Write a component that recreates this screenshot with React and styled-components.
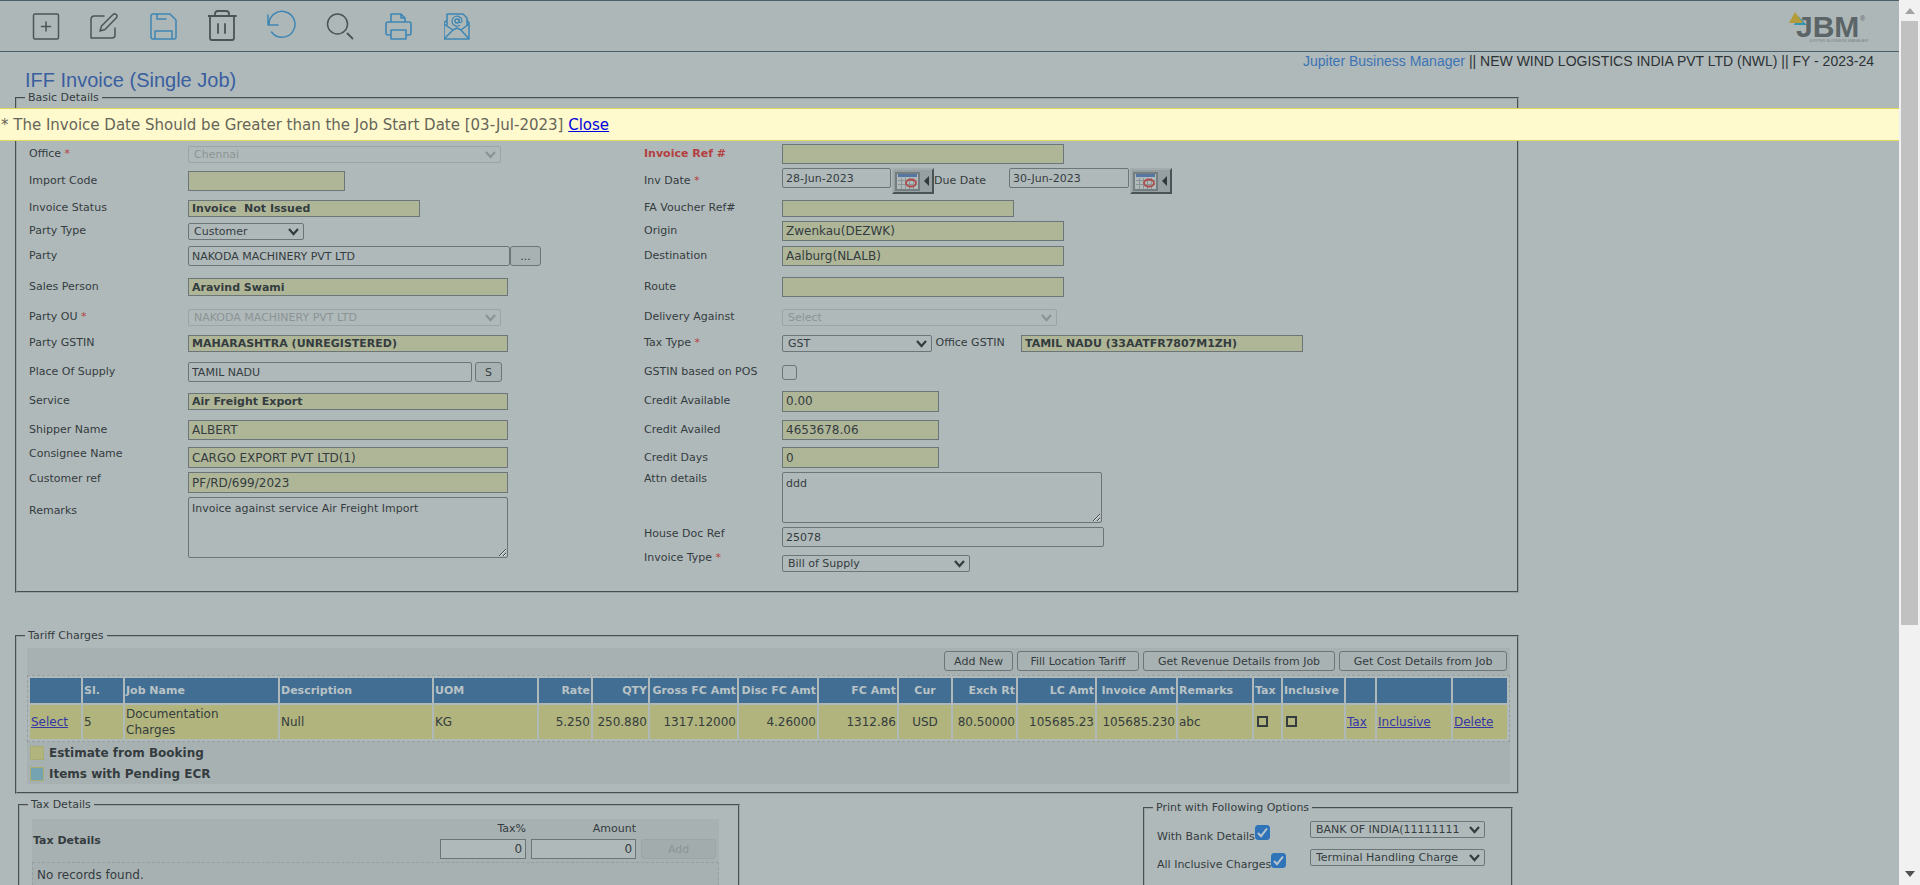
import React from "react";
import styled, { createGlobalStyle, css } from "styled-components";

const c = {
  page: "#b0b9ba",
  toolbar: "#aeb7b8",
  panel: "#a8b1b2",
  button: "#a9b2b3",
  line: "#4a5d68",
  ink: "#343c3f",
  border: "#6c7577",
  faint: "#9ca5a6",
  faintText: "#8b9495",
  olive: "#afb698",
  row: "#b1b47c",
  head: "#426e93",
  headText: "#b9c3c6",
  red: "#b3403f",
  link: "#3537a8",
  blue: "#3e86b4",
};

const Global = createGlobalStyle`
  *, *::before, *::after { box-sizing: border-box; }
  body { margin: 0; background: ${c.page}; overflow: hidden; }
  body, input, select, textarea, button {
    font-family: "DejaVu Sans", Verdana, sans-serif;
    font-size: 11px;
    color: ${c.ink};
  }
`;

const Shell = styled.div`
  display: grid;
  grid-template-columns: minmax(0, 1fr) 21px;
  height: 100vh;
`;

const Page = styled.main`
  position: relative;
  overflow: hidden;
  background: ${c.page};
`;

const Toolbar = styled.header`
  display: flex;
  align-items: center;
  justify-content: space-between;
  height: 52px;
  padding: 0 20px 0 31px;
  background: ${c.toolbar};
  border: solid ${c.line};
  border-width: 1px 0;
`;

const Tools = styled.nav`
  display: flex;
  gap: 29px;
`;

const ToolButton = styled.button`
  width: 30px;
  height: 32px;
  padding: 0;
  border: 0;
  background: none;
  color: ${(p) => (p.$blue ? c.blue : "#4b5457")};
  svg { display: block; }
`;

const Company = styled.div`
  display: flex;
  justify-content: flex-end;
  gap: 4px;
  height: 17px;
  padding-right: 25px;
  font: 14px/19px "Liberation Sans", Arial, sans-serif;
  color: #2b3235;
  a { color: #3b74b5; text-decoration: none; }
`;

const Title = styled.h1`
  margin: 0 0 0 25px;
  height: 22px;
  font: 20px/22px "Liberation Sans", Arial, sans-serif;
  color: #3a5f9f;
`;

const Notice = styled.div`
  position: absolute;
  top: 108px;
  left: 0;
  right: 0;
  height: 33px;
  padding-left: 1px;
  line-height: 33px;
  font-size: 15px;
  color: #66655a;
  background: #fffacd;
  border: solid #dfd75a;
  border-width: 1px 0;
  a { color: #0000dd; }
`;

const Group = styled.fieldset`
  margin: 0;
  min-width: 0;
  border: 2px groove #98a2a3;
  padding: 0;
`;

const Legend = styled.legend`
  margin-left: 8px;
  padding: 0 3px;
  line-height: 14px;
`;

const Basic = styled(Group)`
  width: 79.2%;
  margin-left: 15px;
`;

const Columns = styled.div`
  display: flex;
  padding: 36px 0 19px 12px;
`;

const Column = styled.div`
  width: ${(p) => p.$w || "auto"};
`;

const Line = styled.div`
  display: flex;
  align-items: ${(p) => p.$align || "center"};
  height: ${(p) => p.$h}px;
`;

const Label = styled.label`
  flex: none;
  align-self: ${(p) => (p.$top ? "flex-start" : "auto")};
  width: ${(p) => p.$w || 159}px;
  line-height: ${(p) => p.$lh || 14}px;
  ${(p) => p.$key && css`color: ${c.red}; font-weight: bold;`}
  em { color: ${c.red}; font-style: normal; }
`;

const Input = styled.input`
  width: ${(p) => p.$w}px;
  height: ${(p) => p.$h || 20}px;
  padding: 0 3px;
  border: 1px solid ${c.border};
  border-radius: 2px;
  background: transparent;
  outline: 0;
`;

const Locked = styled(Input)`
  border-radius: 0;
  background: ${c.olive};
  font-size: ${(p) => (p.$bold ? 11 : 12)}px;
  font-weight: ${(p) => (p.$bold ? "bold" : "normal")};
`;

const Area = styled.textarea`
  display: block;
  width: ${(p) => p.$w}px;
  height: ${(p) => p.$h}px;
  padding: 4px 3px;
  line-height: 14px;
  border: 1px solid ${c.border};
  border-radius: 2px;
  background: transparent;
  resize: both;
`;

const SelectWrap = styled.span`
  position: relative;
  display: block;
  width: ${(p) => p.$w}px;
  height: 17px;
  color: ${(p) => (p.$off ? c.faintText : c.ink)};
  svg { position: absolute; right: 5px; top: 5px; pointer-events: none; }
`;

const SelectBox = styled.select`
  appearance: none;
  display: block;
  width: 100%;
  height: 17px;
  padding: 0 24px 0 5px;
  border: 1px solid ${(p) => (p.disabled ? c.faint : c.border)};
  border-radius: 2px;
  background: transparent;
  color: inherit;
  opacity: 1;
`;

const Button = styled.button`
  width: ${(p) => p.$w || "auto"};
  height: ${(p) => p.$h || 20}px;
  padding: 0;
  border: 1px solid ${c.border};
  border-radius: 3px;
  background: ${c.button};
  white-space: nowrap;
  margin-left: ${(p) => p.$ml || 0}px;
  &:disabled { color: ${c.faintText}; border-color: ${c.faint}; background: #a3acad; }
`;

const Dated = styled.div`
  display: flex;
  align-items: flex-start;
  gap: 1px;
`;

const CalButton = styled.button`
  display: flex;
  align-items: center;
  gap: 4px;
  width: 42px;
  height: 26px;
  padding: 0 1px;
  border: 2px solid;
  border-color: #a3acad #4a5356 #4a5356 #a3acad;
  background: #969fa1;
`;

const Tick = styled.input`
  appearance: none;
  width: 15px;
  height: 15px;
  margin: 0;
  border: 1px solid ${c.border};
  border-radius: 3px;
  &:checked {
    border-color: #2f73b9;
    background: #2f73b9;
  }
`;

const TickWrap = styled.span`
  position: relative;
  display: inline-flex;
  svg { position: absolute; left: 0; top: 0; pointer-events: none; }
`;

const Tariff = styled(Basic)`
  margin-top: 36px;
`;

const Panel = styled.div`
  margin: ${(p) => p.$m};
  background: ${c.panel};
`;

const Actions = styled.div`
  display: flex;
  justify-content: flex-end;
  gap: 4px;
  padding: 3px 3px 4px;
`;

const Grid = styled.table`
  width: 100%;
  table-layout: fixed;
  border: 1px dashed #969fa0;
  border-collapse: separate;
  border-spacing: 2px;
  background: ${c.page};
  th {
    height: 25px;
    padding: 0 1px;
    background: ${c.head};
    color: ${c.headText};
    white-space: nowrap;
  }
  td {
    height: 34px;
    padding: 0 1px;
    background: ${c.row};
    font-size: 12px;
    line-height: 16px;
  }
  td input {
    appearance: none;
    display: block;
    width: 11px;
    height: 11px;
    margin: 0 0 2px 2px;
    border: 2px solid ${c.ink};
  }
  a { color: ${c.link}; }
`;

const Keys = styled.ul`
  list-style: none;
  margin: 0;
  padding: 0 0 0 3px;
  font-size: 12px;
  font-weight: bold;
  li { display: flex; align-items: center; gap: 5px; height: 21px; }
`;

const Swatch = styled.i`
  width: 14px;
  height: 14px;
  border: 1px solid #a9ad74;
  background: ${(p) => p.$bg};
`;

const Lower = styled.div`
  display: flex;
  justify-content: space-between;
  align-items: flex-start;
  width: 79.2%;
  margin-left: 15px;
  padding: 4px 6px 0 3px;
`;

const TaxGroup = styled(Group)`
  width: 48.3%;
  height: 140px;
`;

const TaxForm = styled.div`
  display: flex;
  align-items: flex-end;
  gap: 5px;
  padding: 2px 3px 3px 1px;
  strong { flex: 1; align-self: center; font-size: 11px; }
`;

const Amount = styled.label`
  display: flex;
  flex-direction: column;
  gap: 3px;
  text-align: right;
  line-height: 15px;
  input { text-align: right; border-radius: 0; font-size: 12px; background: ${c.page}; }
`;

const Empty = styled.div`
  height: 80px;
  padding: 4px;
  border: 1px dashed #969fa0;
  font-size: 12px;
  line-height: 17px;
`;

const PrintGroup = styled(Group)`
  width: 370px;
  height: 140px;
  margin-top: 3px;
`;

const PrintRow = styled.div`
  display: grid;
  grid-template-columns: 153px 175px;
  height: 28px;
  padding-left: 12px;
  label { padding-top: 9px; line-height: 14px; white-space: nowrap; }
  > div { display: flex; align-items: flex-start; }
  > div > span { margin-top: 4px; }
`;

const Options = styled.div`
  padding-top: 6px;
`;

const ScrollRail = styled.aside`
  display: flex;
  flex-direction: column;
  align-items: center;
  justify-content: space-between;
  padding: 8px 0;
  background: #f1f1f1;
`;

const ScrollTop = styled.div`
  display: flex;
  flex-direction: column;
  align-items: center;
  gap: 7px;
  height: 71%;
  width: 100%;
`;

const Thumb = styled.div`
  flex: 1;
  width: 17px;
  background: #c1c1c1;
`;

const Arrow = ({ down }) => (
  <svg width="10" height="6" viewBox="0 0 10 6">
    <path d={down ? "M0 0h10L5 6z" : "M0 6h10L5 0z"} fill={down ? "#505050" : "#a3a3a3"} />
  </svg>
);

const Tool = ({ name, blue, children }) => (
  <ToolButton type="button" aria-label={name} $blue={blue}>
    <svg width="30" height="32" viewBox="0 0 30 32" fill="none" stroke="currentColor" strokeWidth="1.5" strokeLinecap="round" strokeLinejoin="round">
      {children}
    </svg>
  </ToolButton>
);

const Logo = () => (
  <svg width="92" height="44" viewBox="0 0 92 44" role="img" aria-label="JBM">
    <path d="M11 12l9 9H7z" fill="#3395b5" />
    <path d="M8 8l8 11H2z" fill="#b59c3a" />
    <text x="9" y="33" fontFamily="Liberation Sans, Arial, sans-serif" fontWeight="bold" fontSize="30" fill="#5b6467">JBM</text>
    <text x="73" y="17" fontFamily="Liberation Sans, Arial, sans-serif" fontSize="7" fill="#5b6467">®</text>
    <text x="22" y="38" fontFamily="Liberation Sans, Arial, sans-serif" fontSize="4" fill="#7b8486">JUPITER BUSINESS MANAGER</text>
  </svg>
);

const Select = ({ id, w, value, off, label }) => (
  <SelectWrap $w={w} $off={off}>
    <SelectBox id={id} disabled={off} aria-label={label}>
      <option>{value}</option>
    </SelectBox>
    <svg width="11" height="8" viewBox="0 0 11 8" fill="none" stroke="currentColor" strokeWidth="2.2">
      <path d="M1 1l4.5 5L10 1" />
    </svg>
  </SelectWrap>
);

const Check = ({ id, on }) => (
  <TickWrap>
    <Tick id={id} type="checkbox" defaultChecked={on} />
    {on && (
      <svg width="15" height="15" viewBox="0 0 15 15" fill="none" stroke="#b9c5cd" strokeWidth="2">
        <path d="M3 8l3 3.2L12 3.5" />
      </svg>
    )}
  </TickWrap>
);

const Calendar = ({ label }) => (
  <CalButton type="button" aria-label={label}>
    <svg width="25" height="19" viewBox="0 0 25 19">
      <rect x="1" y="1" width="23" height="17" fill="#b0b9ba" stroke="#747d7f" strokeWidth="2" />
      <rect x="3" y="2" width="19" height="3" fill="#5575a3" />
      <path d="M3 8.5h19M3 12.5h19M6.5 6v11M10.5 6v11M14.5 6v11M18.5 6v11" stroke="#8b9495" />
      <ellipse cx="16" cy="11" rx="5" ry="3.5" fill="none" stroke="#b04a4a" strokeWidth="1.8" />
    </svg>
    <svg width="6" height="10" viewBox="0 0 6 10"><path d="M5 0v10L0 5z" fill="#30383a" /></svg>
  </CalButton>
);

const Field = ({ id, text, h, req, top, lh, keyed, align, w, children }) => (
  <Line $h={h} $align={align}>
    <Label htmlFor={id} $top={top} $lh={lh} $key={keyed} $w={w}>
      {text}
      {req && <em> *</em>}
    </Label>
    {children}
  </Line>
);

const R = (props) => <Field w={138} {...props} />;

const heads = [
  ["", 51], ["Sl.", 40], ["Job Name", 153], ["Description", 152], ["UOM", 103],
  ["Rate", 52, "right"], ["QTY", 55, "right"], ["Gross FC Amt", 87, "right"],
  ["Disc FC Amt", 78, "right"], ["FC Amt", 78, "right"], ["Cur", 52, "center"],
  ["Exch Rt", 63, "right"], ["LC Amt", 77, "right"], ["Invoice Amt", 79, "right"],
  ["Remarks", 74], ["Tax", 27], ["Inclusive", 61], ["", 29], ["", 74], ["", 54],
];

const cells = [
  <a href="#select">Select</a>, "5", <>Documentation<br />Charges</>, "Null", "KG", "5.250", "250.880",
  "1317.12000", "4.26000", "1312.86", "USD", "80.50000", "105685.23", "105685.230", "abc",
  <input type="checkbox" aria-label="Tax" />, <input type="checkbox" aria-label="Inclusive" />,
  <a href="#tax">Tax</a>, <a href="#inclusive">Inclusive</a>, <a href="#delete">Delete</a>,
];

export default function App() {
  return (
    <Shell>
      <Global />
      <Page>
        <Toolbar>
          <Tools>
            <Tool name="New"><rect x="2.5" y="4" width="25" height="25" rx="1.5" /><path d="M15 12v9M10.5 16.5h9" /></Tool>
            <Tool name="Edit"><path d="M14 6H4a3 3 0 0 0-3 3v19h21q3 0 3-3V18" /><path d="M10 21l1.5-5L23 4.5q1.5-1.5 3.2 0t.2 3.2L15 19.5z" /></Tool>
            <Tool name="Save" blue><path d="M2 6q0-2 2-2h17l6 6v17q0 2-2 2H4q-2 0-2-2zM8 4v5h9M6 29v-8h17v8" /></Tool>
            <Tool name="Delete"><path d="M0 6h28M2 6v22q0 2 2 2h20q2 0 2-2V6M7 6V4q0-3 3-3h8q3 0 3 3v2M10 14v9M17 14v9" strokeWidth="1.8" /></Tool>
            <Tool name="Undo" blue><path d="M1 5v10h10M2 14.5A13 13 0 1 1 4.5 22" /></Tool>
            <Tool name="Search"><circle cx="11.5" cy="14" r="10" /><path d="M21.5 23.5l5 5" strokeWidth="1.8" /></Tool>
            <Tool name="Print" blue><path d="M6 12V4h10l4 4v4M16 4v4h4M6 25H3q-2 0-2-2v-9q0-2 2-2h21q2 0 2 2v9q0 2-2 2h-3M6 20h15v9H6z" strokeWidth="1.6" /></Tool>
            <Tool name="Mail" blue>
              <path d="M3 15V4h16l4 4v7M3 10l-3 3v16h25V13l-2-3M0 14l9 6 4-2 4 2 8-6M0 29l9-9M25 29l-8-9" />
              <circle cx="13" cy="11" r="2" /><path d="M15 9v3q2 1.500 3-1a5 5 0 1 0-2.500 4.500" strokeWidth="1.2" />
            </Tool>
          </Tools>
          <Logo />
        </Toolbar>
        <Company>
          <a href="#home">Jupiter Business Manager</a>
          <span>|| NEW WIND LOGISTICS INDIA PVT LTD (NWL) || FY - 2023-24</span>
        </Company>
        <Title>IFF Invoice (Single Job)</Title>
        <Notice role="alert">
          * The Invoice Date Should be Greater than the Job Start Date [03-Jul-2023] <a href="#close">Close</a>
        </Notice>

        <Basic>
          <Legend>Basic Details</Legend>
          <Columns>
            <Column $w="615px">
              <Field id="office" text="Office" req h={26}><Select id="office" w={313} value="Chennai" off /></Field>
              <Field id="imp" text="Import Code" h={28}><Locked id="imp" $w={157} readOnly /></Field>
              <Field id="status" text="Invoice Status" h={26}><Locked id="status" $w={232} $h={17} $bold readOnly value={"Invoice  Not Issued"} /></Field>
              <Field id="ptype" text="Party Type" h={20}><Select id="ptype" w={116} value="Customer" /></Field>
              <Field id="party" text="Party" h={30}>
                <Input id="party" $w={322} defaultValue="NAKODA MACHINERY PVT LTD" />
                <Button type="button" $w="31px" aria-label="Find party">...</Button>
              </Field>
              <Field id="sales" text="Sales Person" h={32}><Locked id="sales" $w={320} $h={18} $bold readOnly value="Aravind Swami" /></Field>
              <Field id="pou" text="Party OU" req h={28}><Select id="pou" w={313} value="NAKODA MACHINERY PVT LTD" off /></Field>
              <Field id="pgst" text="Party GSTIN" h={24}><Locked id="pgst" $w={320} $h={17} $bold readOnly value="MAHARASHTRA (UNREGISTERED)" /></Field>
              <Field id="pos" text="Place Of Supply" h={34}>
                <Input id="pos" $w={284} defaultValue="TAMIL NADU" />
                <Button type="button" $w="27px" $ml={3}>S</Button>
              </Field>
              <Field id="service" text="Service" h={24}><Locked id="service" $w={320} $h={17} $bold readOnly value="Air Freight Export" /></Field>
              <Field id="shipper" text="Shipper Name" h={34}><Locked id="shipper" $w={320} readOnly value="ALBERT" /></Field>
              <Field id="cons" text="Consignee Name" h={25} align="flex-start"><Locked id="cons" $w={320} $h={21} readOnly value="CARGO EXPORT PVT LTD(1)" /></Field>
              <Field id="cref" text="Customer ref" h={25} align="flex-start"><Locked id="cref" $w={320} $h={21} readOnly value="PF/RD/699/2023" /></Field>
              <Field id="remarks" text="Remarks" h={62} align="flex-start" lh={28}><Area id="remarks" $w={320} $h={61} defaultValue="Invoice against service Air Freight Import" /></Field>
            </Column>
            <Column>
              <R id="ref" text="Invoice Ref #" keyed h={26}><Locked id="ref" $w={282} readOnly /></R>
              <R id="idate" text="Inv Date" req h={28}>
                <Dated><Input id="idate" $w={109} defaultValue="28-Jun-2023" /><Calendar label="Pick invoice date" /></Dated>
                <Label htmlFor="ddate" $w={75}>Due Date</Label>
                <Dated><Input id="ddate" $w={120} defaultValue="30-Jun-2023" /><Calendar label="Pick due date" /></Dated>
              </R>
              <R id="fa" text="FA Voucher Ref#" h={26}><Locked id="fa" $w={232} $h={17} readOnly /></R>
              <R id="origin" text="Origin" h={20}><Locked id="origin" $w={282} readOnly value="Zwenkau(DEZWK)" /></R>
              <R id="dest" text="Destination" h={30}><Locked id="dest" $w={282} readOnly value="Aalburg(NLALB)" /></R>
              <R id="route" text="Route" h={32}><Locked id="route" $w={282} readOnly /></R>
              <R id="deliv" text="Delivery Against" h={28}><Select id="deliv" w={275} value="Select" off /></R>
              <R id="ttype" text="Tax Type" req h={24}>
                <Select id="ttype" w={150} value="GST" />
                <Label htmlFor="ogst" $w={89}>&nbsp;Office GSTIN</Label>
                <Locked id="ogst" $w={282} $h={17} $bold readOnly value="TAMIL NADU (33AATFR7807M1ZH)" />
              </R>
              <R id="gpos" text="GSTIN based on POS" h={34}><Check id="gpos" /></R>
              <R id="cavail" text="Credit Available" h={24}><Locked id="cavail" $w={157} $h={21} readOnly value="0.00" /></R>
              <R id="cused" text="Credit Availed" h={34}><Locked id="cused" $w={157} readOnly value="4653678.06" /></R>
              <R id="cdays" text="Credit Days" h={25} align="flex-start" lh={22}><Locked id="cdays" $w={157} $h={21} readOnly value="0" /></R>
              <R id="attn" text="Attn details" h={55} align="flex-start"><Area id="attn" $w={320} $h={51} defaultValue="ddd" /></R>
              <R id="house" text="House Doc Ref" h={24} align="flex-start"><Input id="house" $w={322} defaultValue="25078" /></R>
              <R id="itype" text="Invoice Type" req h={21} align="flex-end" top><Select id="itype" w={188} value="Bill of Supply" /></R>
            </Column>
          </Columns>
        </Basic>

        <Tariff>
          <Legend>Tariff Charges</Legend>
          <Panel $m="5px 7px 8px 10px">
            <Actions>
              <Button type="button" $w="69px">Add New</Button>
              <Button type="button" $w="122px">Fill Location Tariff</Button>
              <Button type="button" $w="192px">Get Revenue Details from Job</Button>
              <Button type="button" $w="168px">Get Cost Details from Job</Button>
            </Actions>
            <Grid>
              <colgroup>{heads.map(([, w], i) => <col key={i} width={w} />)}</colgroup>
              <thead>
                <tr>{heads.map(([t, , a], i) => <th key={i} align={a || "left"}>{t}</th>)}</tr>
              </thead>
              <tbody>
                <tr>{cells.map((t, i) => <td key={i} align={heads[i][2]}>{t}</td>)}</tr>
              </tbody>
            </Grid>
            <Keys>
              <li><Swatch $bg={c.row} />Estimate from Booking</li>
              <li><Swatch $bg="#76a3b1" />Items with Pending ECR</li>
            </Keys>
          </Panel>
        </Tariff>

        <Lower>
          <TaxGroup>
            <Legend>Tax Details</Legend>
            <Panel $m="7px 19px 0 12px">
              <TaxForm>
                <strong>Tax Details</strong>
                <Amount>Tax%<Input $w={86} defaultValue="0" /></Amount>
                <Amount>Amount<Input $w={105} defaultValue="0" /></Amount>
                <Button type="button" $w="75px" disabled>Add</Button>
              </TaxForm>
              <Empty>No records found.</Empty>
            </Panel>
          </TaxGroup>
          <PrintGroup>
            <Legend>Print with Following Options</Legend>
            <Options>
              <PrintRow>
                <div><label htmlFor="bank">With Bank Details</label><Check id="bank" on /></div>
                <Select label="Bank" w={175} value="BANK OF INDIA(1111111111)" />
              </PrintRow>
              <PrintRow>
                <div><label htmlFor="incl">All Inclusive Charges</label><Check id="incl" on /></div>
                <Select label="Charge" w={175} value="Terminal Handling Charge" />
              </PrintRow>
            </Options>
          </PrintGroup>
        </Lower>
      </Page>
      <ScrollRail aria-hidden="true">
        <ScrollTop><Arrow /><Thumb /></ScrollTop>
        <Arrow down />
      </ScrollRail>
    </Shell>
  );
}
